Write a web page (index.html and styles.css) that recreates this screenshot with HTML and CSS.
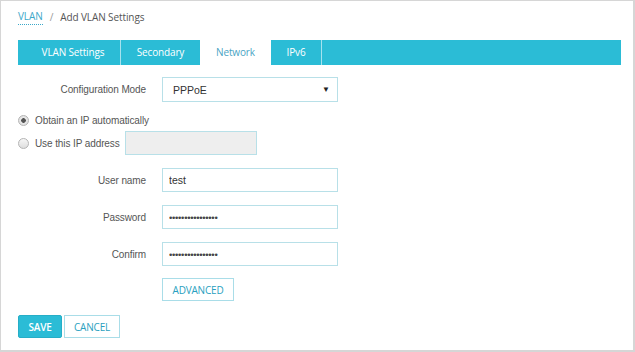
FILE: index.html
```html
<!DOCTYPE html>
<html lang="en">
<head>
<meta charset="utf-8">
<title>Add VLAN Settings</title>
<link rel="stylesheet" href="styles.css">
</head>
<body>

<div class="page">
	<div class="crumbs">
		<a class="crumb-link">VLAN</a>
		<span class="crumb-sep">/</span>
		<span class="crumb-current">Add VLAN Settings</span>
	</div>

	<ul class="tabs">
		<li class="tab tab-first">VLAN Settings</li>
		<li class="tab tab-secondary">Secondary</li>
		<li class="tab tab-active">Network</li>
		<li class="tab tab-ipv6">IPv6</li>
	</ul>

	<div class="form">
		<div class="row row-mode">
			<label class="label">Configuration Mode</label>
			<div class="select">PPPoE<span class="arrow">&#9660;</span></div>
		</div>

		<div class="radio-row radio-auto">
			<input type="radio" name="ipmode" class="radio" checked>
			<span class="radio-text">Obtain an IP automatically</span>
		</div>
		<div class="radio-row radio-static">
			<input type="radio" name="ipmode" class="radio">
			<span class="radio-text">Use this IP address</span>
			<input type="text" class="field field-disabled" disabled>
		</div>

		<div class="row row-user">
			<label class="label">User name</label>
			<input type="text" class="field" value="test">
		</div>
		<div class="row">
			<label class="label">Password</label>
			<input type="password" class="field field-secret" value="passwordpassword">
		</div>
		<div class="row">
			<label class="label">Confirm</label>
			<input type="password" class="field field-secret" value="passwordpassword">
		</div>

		<div class="row row-advanced">
			<span class="label"></span>
			<button class="btn btn-outline">ADVANCED</button>
		</div>
	</div>

	<div class="actions">
		<button class="btn btn-primary">SAVE</button>
		<button class="btn btn-outline">CANCEL</button>
	</div>
</div>

</body>
</html>
```

FILE: styles.css
```css
html {
	font-family: 'Liberation Sans', Arial, sans-serif;
}

body {
	margin: 0;
	background-color: #ffffff;
}

.page {
	box-sizing: border-box;
	width: 635px;
	height: 352px;
	border: 1px solid #d6d6d6;
	border-width: 1px 2px 2px 1px;
	padding: 0 12px 0 17px;
}

/* breadcrumb */

.crumbs {
	display: flex;
	align-items: center;
	margin-top: 7px;
	font-family: 'Open Sans', sans-serif;
	font-size: 10px;
	letter-spacing: -0.1px;
	line-height: 16px;
	color: #555555;
}

.crumb-link {
	color: #3aa8c9;
	border-bottom: 1px dotted #3aa8c9;
}

.crumb-sep {
	color: #999999;
	margin: 0 7px;
}

/* tabs */

.tabs {
	display: flex;
	list-style-type: none;
	margin: 15px 0 0 0;
	padding: 0;
	height: 25px;
	background-color: #2bbcd6;
	font-family: 'Open Sans', sans-serif;
	font-size: 10px;
	letter-spacing: -0.15px;
}

.tab {
	box-sizing: border-box;
	text-align: center;
	line-height: 25px;
	color: #ffffff;
	border-right: 1px solid #a6e2ee;
}

.tab-first {
	width: 103px;
	padding-left: 8px;
}

.tab-secondary {
	width: 79px;
	border-right: 0;
}

.tab-active {
	width: 71px;
	background-color: #ffffff;
	color: #4aa4c4;
	border-right: 0;
}

.tab-ipv6 {
	width: 51px;
}

/* form */

.form {
	display: flex;
	flex-direction: column;
}

.row {
	display: flex;
	align-items: center;
	margin-top: 13px;
}

.label {
	width: 128px;
	margin-right: 16px;
	text-align: right;
	font-size: 10px;
	letter-spacing: -0.1px;
	color: #555555;
}

.field, .select {
	box-sizing: border-box;
	width: 176px;
	height: 24px;
	border: 1px solid #b8e0e8;
	padding: 0 6px;
	font-family: 'Liberation Sans', Arial, sans-serif;
	font-size: 10.5px;
	color: #333333;
	background-color: #ffffff;
	outline: none;
}

.field-secret {
	font-size: 9.5px;
	letter-spacing: -0.3px;
	color: #444444;
}

.select {
	display: flex;
	align-items: center;
	justify-content: space-between;
	height: 25px;
	padding: 0 7px 0 10px;
}

.arrow {
	font-size: 8px;
	color: #222222;
}

.row-mode {
	margin-top: 12px;
}

.radio-row {
	display: flex;
	align-items: center;
	font-size: 10px;
	letter-spacing: -0.1px;
	color: #555555;
}

.radio-auto {
	margin-top: 10px;
	height: 16px;
}

.radio-static {
	margin-top: 3px;
}

.radio {
	appearance: none;
	-webkit-appearance: none;
	box-sizing: border-box;
	width: 11px;
	height: 11px;
	margin: 0 6px 0 0;
	border: 1px solid #b4b4b4;
	border-radius: 50%;
	background: linear-gradient(#f6f6f6, #dedede);
}

.radio:checked {
	background: radial-gradient(circle, #555555 0, #555555 2px, #e8e8e8 2.6px, #dcdcdc 100%);
}

.radio-text {
	white-space: nowrap;
}

.field-disabled {
	width: 132px;
	margin-left: 5px;
	background-color: #eeeeee;
}

.row-user {
	margin-top: 13px;
}

.row-advanced {
	margin-top: 12px;
}

/* buttons */

.btn {
	box-sizing: border-box;
	height: 23px;
	padding: 0;
	font-family: 'Open Sans', sans-serif;
	font-size: 10px;
	letter-spacing: -0.2px;
	cursor: pointer;
}

.btn-outline {
	background-color: #ffffff;
	border: 1px solid #a9dde8;
	color: #2a9fc0;
}

.btn-primary {
	background-color: #2bbcd6;
	border: 1px solid #26aec7;
	border-radius: 2px;
	color: #ffffff;
	font-weight: 600;
}

.actions {
	display: flex;
	gap: 2px;
	margin-top: 14px;
}

.actions .btn-primary {
	width: 44px;
}

.actions .btn-outline {
	width: 56px;
}

.row-advanced .btn {
	width: 72px;
}
```
